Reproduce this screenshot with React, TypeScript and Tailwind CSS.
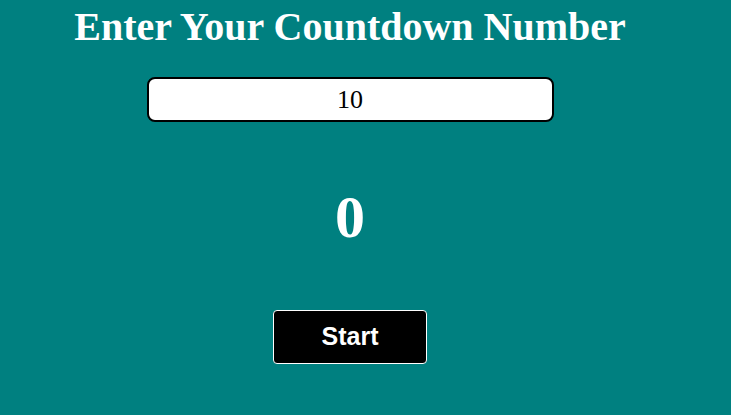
export default function App() {
  return (
    <div className="min-h-[415px] w-full bg-[#008080]">
      <div className="w-[700px] flex flex-col items-center">
        <h1 className="mt-[4px] text-[40px] leading-[46px] font-bold text-white font-['Liberation_Serif',serif]">
          Enter Your Countdown Number
        </h1>
        <input
          type="text"
          defaultValue="10"
          className="mt-[27px] w-[407px] h-[45px] border-2 border-black rounded-[8px] bg-white text-center text-[26px] text-black outline-none font-['Liberation_Serif',serif]"
        />
        <div className="mt-[60px] text-[60px] leading-[70px] font-bold text-white font-['Liberation_Serif',serif]">
          0
        </div>
        <button className="mt-[58px] w-[154px] h-[54px] bg-black border border-white rounded-[4px] text-white text-[25px] font-bold font-['Liberation_Sans',sans-serif]">
          Start
        </button>
      </div>
    </div>
  );
}
